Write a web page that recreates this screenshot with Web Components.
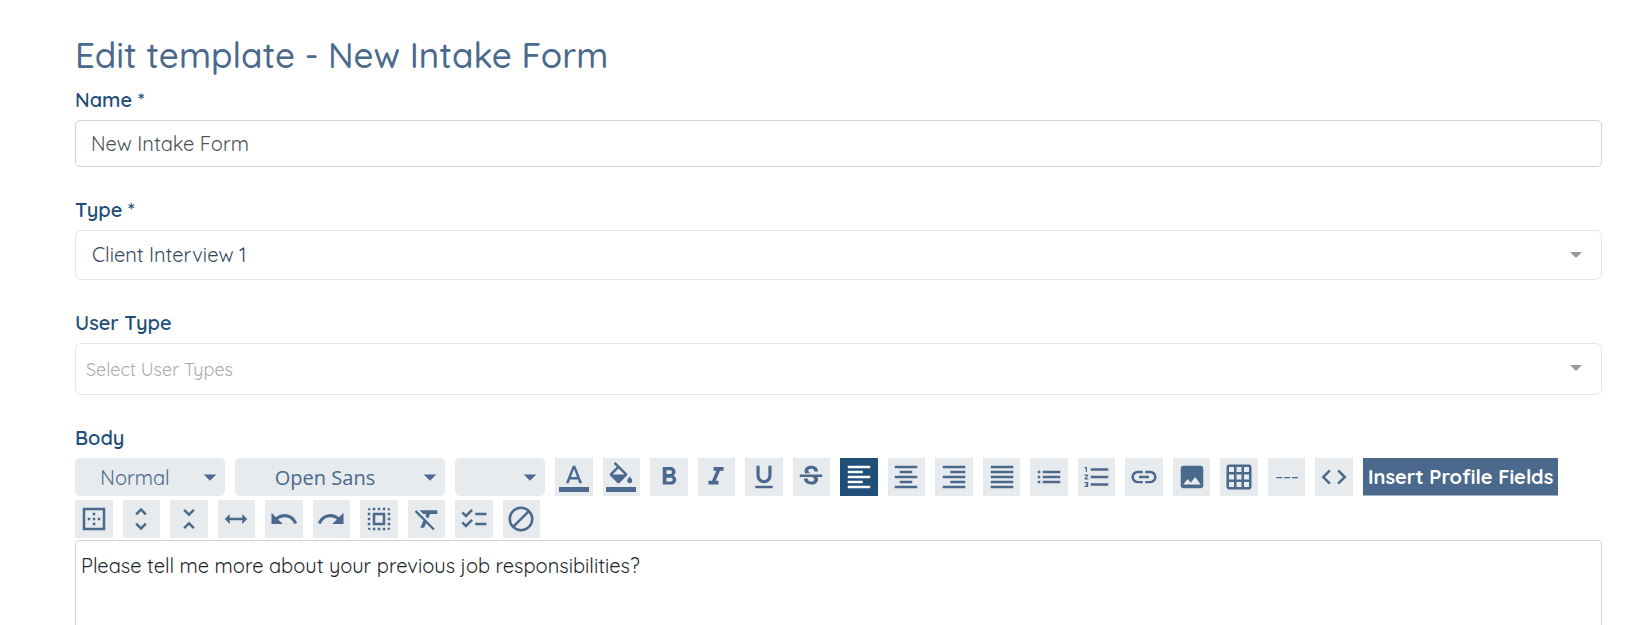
<!DOCTYPE html>
<html lang="en">
<head>
<meta charset="utf-8">
<title>Edit template - New Intake Form</title>
<style>
  body {
    margin: 0;
    background: #fff;
    color: #212529;
    font-family: Quicksand, Lato, "Open Sans", sans-serif;
    --ink: #4a698c;
    --navy: #1f4e79;
    --chip: #e7ebee;
    --text-size: 20px;
  }
</style>
</head>
<body>
<template-page heading="Edit template - New Intake Form">
  <text-field label="Name *" value="New Intake Form"></text-field>
  <select-field label="Type *" options="Client Interview 1"></select-field>
  <select-field class="multi" label="User Type" options="Select User Types"></select-field>
  <body-editor label="Body" value="Please tell me more about your previous job responsibilities?">
    <tool-select label="Paragraph style" options="Normal" style="--width: 150px"></tool-select>
    <tool-select label="Font" options="Open Sans" style="--width: 210px; --face: 'Open Sans', sans-serif"></tool-select>
    <tool-select label="Font size" options="" style="--width: 90px"></tool-select>
    <tool-group icons="color,fill,bold,italic,underline,strike,left*,center,right,justify,bullets,numbers,link,image,grid,rule,code" style="--count: 17; --width: 798px"></tool-group>
    <text-button>Insert Profile Fields</text-button>
    <tool-group icons="border,expand,collapse,width,undo,redo,all,clear,checklist,none" style="--count: 10; --width: 465px"></tool-group>
  </body-editor>
</template-page>

<script>
const icons = {
  color: ['Text color', '<path d="M11 3L5.5 17h2.25l1.12-3h6.25l1.12 3h2.25L13 3h-2zm-1.38 9L12 5.67 14.38 12H9.62zM0 20h24v4H0z"/>'],
  fill: ['Background color', '<path d="M16.56 8.94L7.62 0 6.21 1.41l2.38 2.38-5.15 5.15c-.59.59-.59 1.54 0 2.12l5.5 5.5c.29.29.68.44 1.06.44s.77-.15 1.06-.44l5.5-5.5c.59-.58.59-1.53 0-2.12zM5.21 10L10 5.21 14.79 10H5.21zM19 11.5s-2 2.17-2 3.5c0 1.1.9 2 2 2s2-.9 2-2c0-1.33-2-3.5-2-3.5zM0 20h24v4H0z"/>'],
  bold: ['Bold', '<path d="M15.6 10.79c.97-.67 1.65-1.77 1.65-2.79 0-2.26-1.75-4-4-4H7v14h7.04c2.09 0 3.71-1.7 3.71-3.79 0-1.52-.86-2.82-2.15-3.42zM10 6.5h3c.83 0 1.5.67 1.5 1.5s-.67 1.5-1.5 1.5h-3v-3zm3.5 9H10v-3h3.5c.83 0 1.5.67 1.5 1.5s-.67 1.5-1.5 1.5z"/>'],
  italic: ['Italic', '<path d="M10 4v3h2.21l-3.42 8H6v3h8v-3h-2.21l3.42-8H18V4z"/>'],
  underline: ['Underline', '<path d="M12 17c3.31 0 6-2.69 6-6V3h-2.5v8c0 1.93-1.57 3.5-3.5 3.5S8.5 12.93 8.5 11V3H6v8c0 3.31 2.69 6 6 6zm-7 2v2h14v-2H5z"/>'],
  strike: ['Strikethrough', '<path d="M7.24 8.75c-.26-.48-.39-1.03-.39-1.67 0-.61.13-1.16.4-1.67.26-.5.63-.93 1.11-1.29.48-.35 1.05-.63 1.7-.83.66-.19 1.39-.29 2.18-.29.81 0 1.54.11 2.21.34.66.22 1.23.54 1.69.94.47.4.83.88 1.08 1.43.25.55.38 1.15.38 1.81h-3.01c0-.31-.05-.59-.15-.85-.09-.27-.24-.49-.44-.68-.2-.19-.45-.33-.75-.44-.3-.1-.66-.16-1.06-.16-.39 0-.74.04-1.03.13-.29.09-.53.21-.72.36-.19.16-.34.34-.44.55-.1.21-.15.43-.15.66 0 .48.25.88.74 1.21.38.25.77.48 1.41.7H7.39c-.05-.08-.11-.17-.15-.25zM21 12v-2H3v2h9.62c.18.07.4.14.55.2.37.17.66.34.87.51.21.17.35.36.43.57.07.2.11.43.11.69 0 .23-.05.45-.14.66-.09.2-.23.38-.42.53-.19.15-.42.26-.71.35-.29.08-.63.13-1.01.13-.43 0-.83-.04-1.18-.13s-.66-.23-.91-.42c-.25-.19-.45-.44-.59-.75-.14-.31-.25-.76-.25-1.21H6.4c0 .55.08 1.13.24 1.58.16.45.37.85.65 1.21.28.35.6.66.98.92.37.26.78.48 1.22.65.44.17.9.3 1.38.39.48.08.96.13 1.44.13.8 0 1.53-.09 2.18-.28s1.21-.45 1.67-.79c.46-.34.82-.77 1.07-1.27s.38-1.07.38-1.71c0-.6-.1-1.14-.31-1.61-.05-.11-.11-.23-.17-.33H21z"/>'],
  left: ['Align left', '<path d="M15 15H3v2h12v-2zm0-8H3v2h12V7zM3 13h18v-2H3v2zm0 8h18v-2H3v2zM3 3v2h18V3H3z"/>'],
  center: ['Align center', '<path d="M7 15v2h10v-2H7zm-4 6h18v-2H3v2zm0-8h18v-2H3v2zm4-6v2h10V7H7zM3 3v2h18V3H3z"/>'],
  right: ['Align right', '<path d="M3 21h18v-2H3v2zm6-4h12v-2H9v2zm-6-4h18v-2H3v2zm6-4h12V7H9v2zM3 3v2h18V3H3z"/>'],
  justify: ['Justify', '<path d="M3 21h18v-2H3v2zm0-4h18v-2H3v2zm0-4h18v-2H3v2zm0-4h18V7H3v2zm0-6v2h18V3H3z"/>'],
  bullets: ['Bulleted list', '<path d="M3 13h2v-2H3v2zm0 4h2v-2H3v2zm0-8h2V7H3v2zm4 4h14v-2H7v2zm0 4h14v-2H7v2zM7 7v2h14V7H7z"/>'],
  numbers: ['Numbered list', '<path d="M2 17h2v.5H3v1h1v.5H2v1h3v-4H2v1zm1-9h1V4H2v1h1v3zm-1 3h1.8L2 13.1v.9h3v-1H3.2L5 10.9V10H2v1zm5-6v2h14V5H7zm0 14h14v-2H7v2zm0-6h14v-2H7v2z"/>'],
  link: ['Insert link', '<path d="M3.9 12c0-1.71 1.39-3.1 3.1-3.1h4V7H7c-2.76 0-5 2.24-5 5s2.24 5 5 5h4v-1.9H7c-1.71 0-3.1-1.39-3.1-3.1zM8 13h8v-2H8v2zm9-6h-4v1.9h4c1.71 0 3.1 1.39 3.1 3.1s-1.39 3.1-3.1 3.1h-4V17h4c2.76 0 5-2.24 5-5s-2.24-5-5-5z"/>'],
  image: ['Insert image', '<path d="M21 19V5c0-1.1-.9-2-2-2H5c-1.1 0-2 .9-2 2v14c0 1.1.9 2 2 2h14c1.1 0 2-.9 2-2zM8.5 13.5l2.5 3.01L14.5 12l4.5 6H5l3.5-4.5z"/>'],
  grid: ['Insert table', '<path d="M20 2H4c-1.1 0-2 .9-2 2v16c0 1.1.9 2 2 2h16c1.1 0 2-.9 2-2V4c0-1.1-.9-2-2-2zM8 20H4v-4h4v4zm0-6H4v-4h4v4zm0-6H4V4h4v4zm6 12h-4v-4h4v4zm0-6h-4v-4h4v4zm0-6h-4V4h4v4zm6 12h-4v-4h4v4zm0-6h-4v-4h4v4zm0-6h-4V4h4v4z"/>'],
  rule: ['Horizontal rule', '<path d="M3.5 12h4.8v1H3.5zm6.2 0h4.8v1H9.7zm6.2 0h4.8v1h-4.8z"/>'],
  code: ['Source code', '<path d="M9.4 16.6L4.8 12l4.6-4.6L8 6l-6 6 6 6 1.4-1.4zm5.2 0l4.6-4.6-4.6-4.6L16 6l6 6-6 6-1.4-1.4z"/>'],
  border: ['Outer border', '<path d="M13 7h-2v2h2V7zm0 4h-2v2h2v-2zm4 0h-2v2h2v-2zM3 3v18h18V3H3zm16 16H5V5h14v14zm-6-4h-2v2h2v-2zm-4-4H7v2h2v-2z"/>'],
  expand: ['Expand', '<path d="M12 5.83L15.17 9l1.41-1.41L12 3 7.41 7.59 8.83 9 12 5.83zm0 12.34L8.83 15l-1.41 1.41L12 21l4.59-4.59L15.17 15 12 18.17z"/>'],
  collapse: ['Collapse', '<path d="M7.41 18.59L8.83 20 12 16.83 15.17 20l1.41-1.41L12 14l-4.59 4.59zm9.18-13.18L15.17 4 12 7.17 8.83 4 7.41 5.41 12 10l4.59-4.59z"/>'],
  width: ['Full width', '<path d="M3 12l4-4v3h10V8l4 4-4 4v-3H7v3z"/>'],
  undo: ['Undo', '<path d="M12.5 8c-2.65 0-5.05.99-6.9 2.6L2 7v9h9l-3.62-3.62c1.39-1.16 3.16-1.88 5.12-1.88 3.54 0 6.55 2.31 7.6 5.5l2.37-.78C21.08 11.03 17.15 8 12.5 8z"/>'],
  redo: ['Redo', '<path d="M18.4 10.6C16.55 8.99 14.15 8 11.5 8c-4.65 0-8.58 3.03-9.96 7.22L3.9 16c1.05-3.19 4.05-5.5 7.6-5.5 1.95 0 3.73.72 5.12 1.88L13 16h9V7l-3.6 3.6z"/>'],
  all: ['Select all', '<path d="M3 5h2V3c-1.1 0-2 .9-2 2zm0 8h2v-2H3v2zm4 8h2v-2H7v2zM3 9h2V7H3v2zm10-6h-2v2h2V3zm6 0v2h2c0-1.1-.9-2-2-2zM5 21v-2H3c0 1.1.9 2 2 2zm-2-4h2v-2H3v2zM9 3H7v2h2V3zm2 18h2v-2h-2v2zm8-8h2v-2h-2v2zm0 8c1.1 0 2-.9 2-2h-2v2zm0-12h2V7h-2v2zm0 8h2v-2h-2v2zm-4 4h2v-2h-2v2zm0-16h2V3h-2v2zM7 17h10V7H7v10zm2-8h6v6H9V9z"/>'],
  clear: ['Clear formatting', '<path d="M3.27 5L2 6.27l6.97 6.97L6.5 19h3l1.57-3.66L16.73 21 18 19.73 3.55 5.27 3.27 5zM6 5v.18L8.82 8h2.4l-.72 1.68 2.1 2.1L14.21 8H20V5H6z" transform="translate(1)"/>'],
  checklist: ['Checklist', '<path d="M22 7h-9v2h9V7zm0 8h-9v2h9v-2zM5.54 11L2 7.46l1.41-1.41 2.12 2.12 4.24-4.24 1.41 1.41L5.54 11zm0 8L2 15.46l1.41-1.41 2.12 2.12 4.24-4.24 1.41 1.41L5.54 19z"/>'],
  none: ['Remove', '<g fill="none" stroke="currentColor" stroke-width="2"><circle cx="12" cy="12" r="9"/><path d="M5.7 18.3L18.3 5.7"/></g>']
};

const attr = (el, name) => (el.getAttribute(name) || '');
const optionList = el => attr(el, 'options').split(',').map(o => `<option>${o}</option>`).join('');

class ShadowElement extends HTMLElement {
  connectedCallback() {
    if (this.shadowRoot) return;
    this.attachShadow({ mode: 'open' }).innerHTML =
      `<style>*{box-sizing:border-box}${this.styles()}</style>${this.markup()}`;
  }
}

const labelStyles = `
  label { display: block; margin-bottom: 5px; color: var(--navy); font-size: var(--text-size); font-weight: 600; line-height: 30px; }`;

customElements.define('template-page', class extends ShadowElement {
  styles() { return `
    :host { display: block; }
    main { display: flex; flex-direction: column; gap: 28px; min-height: 100vh; padding: 30px 27px 0 75px; }
    h1 { margin: 0 0 -23px; color: var(--ink); font-size: 35px; font-weight: 500; line-height: 50px; }`; }
  markup() { return `<main><h1>${attr(this, 'heading')}</h1><slot></slot></main>`; }
});

customElements.define('text-field', class extends ShadowElement {
  styles() { return `
    :host { display: block; }
    ${labelStyles}
    input { display: block; width: 100%; height: 47px; padding: 0 15px; border: 1px solid #ced4da; border-radius: 5px; background: #fff; color: #495057; font: 400 var(--text-size) Quicksand, Lato, sans-serif; outline: none; }`; }
  markup() { return `<label for="control">${attr(this, 'label')}</label><input id="control" type="text" value="${attr(this, 'value')}">`; }
});

customElements.define('select-field', class extends ShadowElement {
  styles() { return `
    :host { display: block; }
    ${labelStyles}
    .box { position: relative; }
    .box::after { content: ""; position: absolute; top: 22px; right: 20px; border: 6px solid transparent; border-top-color: #999; border-bottom: 0; pointer-events: none; }
    select { display: block; appearance: none; width: 100%; height: 50px; padding: 0 40px 2px 16px; border: 1px solid #e4e6e8; border-radius: 6px; background: #fff; color: #34495e; font: 400 var(--text-size) Quicksand, Lato, sans-serif; outline: none; }
    :host(.multi) select { height: 52px; padding: 0 40px 0 10px; color: #aaa; font-size: 18px; }`; }
  markup() { return `<label for="control">${attr(this, 'label')}</label><div class="box"><select id="control">${optionList(this)}</select></div>`; }
});

customElements.define('tool-select', class extends ShadowElement {
  styles() { return `
    :host { display: grid; width: var(--width); height: 38px; color: var(--ink); }
    select, svg { grid-area: 1 / 1; }
    select { appearance: none; width: 100%; height: 100%; padding: 0 30px 0 0; border: 0; border-radius: 5px; background: var(--chip); color: inherit; font-family: var(--face, inherit); font-size: var(--text-size); text-align: center; text-align-last: center; outline: none; }
    svg { width: 30px; height: 30px; place-self: center end; fill: currentColor; pointer-events: none; }`; }
  markup() { return `<select aria-label="${attr(this, 'label')}">${optionList(this)}</select><svg viewBox="0 0 24 24" aria-hidden="true"><path d="M7 10l5 5 5-5z"/></svg>`; }
});

customElements.define('tool-group', class extends ShadowElement {
  styles() { return `
    :host { display: grid; grid-template-columns: repeat(var(--count), 1fr); gap: 10px; width: var(--width); }
    button { display: grid; place-items: center; min-width: 0; height: 38px; padding: 0; border: 0; background: var(--chip); color: var(--ink); }
    button[aria-pressed=true] { background: var(--navy); color: #fff; }
    svg { width: 30px; height: 30px; fill: currentColor; }`; }
  markup() {
    return attr(this, 'icons').split(',').map(entry => {
      const pressed = entry.endsWith('*');
      const [title, shape] = icons[entry.replace('*', '')];
      return `<button type="button" aria-label="${title}" aria-pressed="${pressed}"><svg viewBox="0 0 24 24" aria-hidden="true">${shape}</svg></button>`;
    }).join('');
  }
});

customElements.define('text-button', class extends ShadowElement {
  styles() { return `
    :host { display: block; }
    button { display: block; height: 38px; padding: 0 5px; border: 0; border-bottom: 1px solid #a4b4c6; background: var(--ink); color: #fff; font: 700 var(--text-size) Quicksand, Lato, sans-serif; white-space: nowrap; }`; }
  markup() { return `<button type="button"><slot></slot></button>`; }
});

customElements.define('body-editor', class extends ShadowElement {
  styles() { return `
    :host { display: flex; flex-direction: column; flex: 1; }
    ${labelStyles}
    .toolbar { display: flex; flex-wrap: wrap; gap: 4px 10px; margin-bottom: 2px; }
    textarea { display: block; flex: 1; width: 100%; min-height: 80px; padding: 10px 5px; border: 1px solid #ced4da; border-bottom: 0; border-radius: 5px 5px 0 0; background: #fff; color: #212529; font: 400 var(--text-size)/30px Quicksand, Lato, sans-serif; resize: none; outline: none; }`; }
  markup() { return `<label for="control">${attr(this, 'label')}</label><div class="toolbar" role="toolbar"><slot></slot></div><textarea id="control">${attr(this, 'value')}</textarea>`; }
});
</script>
</body>
</html>
